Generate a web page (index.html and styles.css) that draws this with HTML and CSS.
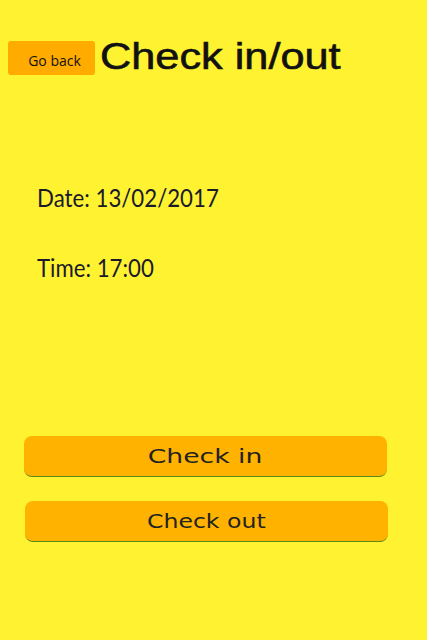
FILE: index.html
```html
<!DOCTYPE html>
<html>
<head>
<meta charset="utf-8">
<link rel="stylesheet" href="styles.css">
</head>
<body>
<div class="page">
  <header class="top">
    <button class="back">Go back</button>
    <h1 class="title">Check in/out</h1>
  </header>
  <section class="info">
    <p class="line">Date: 13/02/2017</p>
    <p class="line time">Time: 17:00</p>
  </section>
  <section class="actions">
    <button class="action action-in"><span class="label">Check in</span></button>
    <button class="action action-out"><span class="label">Check out</span></button>
  </section>
</div>
</body>
</html>
```
FILE: styles.css
```css
html, body {
  margin: 0;
  padding: 0;
  background: #fff231;
  width: 427px;
  height: 640px;
  overflow: hidden;
}
.page {
  display: flex;
  flex-direction: column;
}
.top {
  display: flex;
  align-items: flex-start;
  gap: 5px;
  padding: 35px 0 0 8px;
}
.back {
  width: 87px;
  height: 34px;
  margin-top: 6px;
  background: #ffab00;
  border: none;
  border-radius: 3px;
  font-family: "Open Sans", sans-serif;
  font-size: 14px;
  color: #111;
  padding: 4px 0 0 6px;
}
.title {
  margin: 0;
  font-family: "Liberation Sans", Arial, sans-serif;
  font-weight: normal;
  font-size: 37px;
  line-height: 44px;
  color: #111;
  -webkit-text-stroke: 0.6px #111;
  transform: scaleX(1.17);
  transform-origin: left center;
  white-space: nowrap;
}
.info {
  padding: 103px 0 0 37px;
}
.line {
  margin: 0;
  font-family: Lato, "Open Sans", sans-serif;
  font-size: 25px;
  line-height: 30px;
  color: #1a1a2a;
  white-space: nowrap;
  transform: scaleX(0.89);
  transform-origin: left center;
}
.time {
  margin-top: 40px;
}
.actions {
  display: flex;
  flex-direction: column;
  gap: 24px;
  padding: 154px 40px 0 24px;
}
.action {
  height: 41px;
  background: #ffb300;
  border: none;
  border-bottom: 1px solid #5a8a1a;
  border-radius: 8px;
  font-family: "DejaVu Sans", sans-serif;
  font-size: 20px;
  color: #222;
  padding: 0;
  display: flex;
  align-items: center;
  justify-content: center;
}
.action-out {
  margin-left: 1px;
  margin-right: -1px;
}
.label {
  display: inline-block;
  white-space: nowrap;
}
.action-in .label {
  transform: scaleX(1.33);
}
.action-out .label {
  transform: scaleX(1.18);
}
```
